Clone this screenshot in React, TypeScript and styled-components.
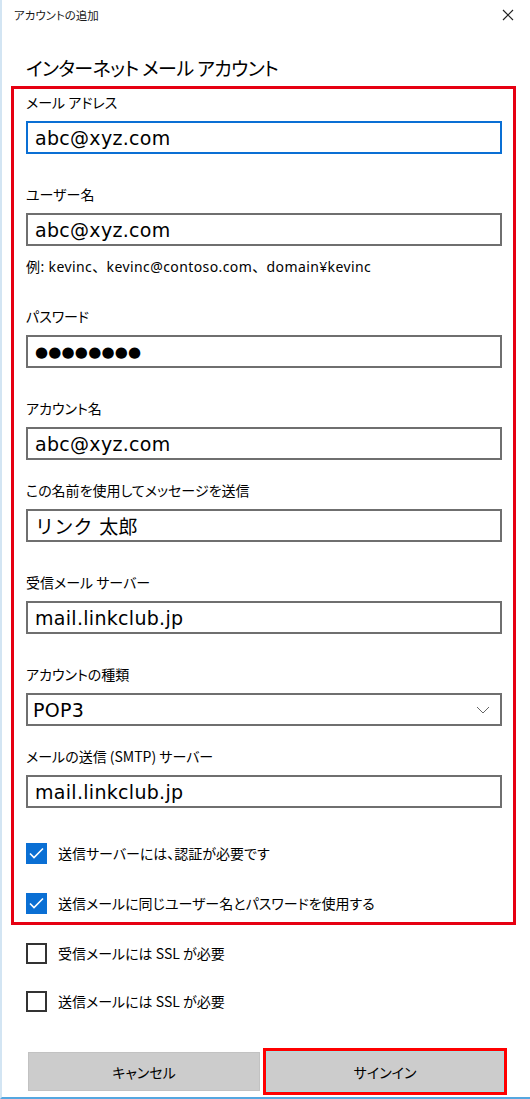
import styled, { createGlobalStyle } from 'styled-components';

const GlobalStyle = createGlobalStyle`
  html, body {
    margin: 0;
    padding: 0;
    background: #ffffff;
    overflow: hidden;
  }
  * {
    box-sizing: border-box;
  }
`;

const Window = styled.div`
  width: 530px;
  height: 1099px;
  background: #ffffff;
  border-left: 2px solid #d3e5f3;
  border-bottom: 2px solid #55a7e0;
  font-family: "Noto Sans CJK JP", "Noto Sans", sans-serif;
  font-feature-settings: "palt";
  color: #000;
  display: flex;
  flex-direction: column;
`;

const TitleBar = styled.div`
  height: 30px;
  display: flex;
  align-items: center;
  justify-content: space-between;
  padding: 0 16px 0 12px;
`;

const TitleText = styled.span`
  font-size: 11.5px;
  color: #1a1a1a;
`;

const CloseButton = styled.button`
  border: none;
  background: none;
  padding: 0;
  width: 12px;
  height: 12px;
  display: flex;
  color: #222;
`;

const Heading = styled.h1`
  margin: 24px 0 4px 24px;
  font-size: 19px;
  line-height: 28px;
  letter-spacing: -0.6px;
  font-weight: 400;
`;

const Body = styled.div`
  padding: 0 14px 0 9px;
`;

const Highlight = styled.div`
  border: 3px solid #e60012;
  padding: 3px 11px 4px 12px;
`;

const Field = styled.div<{ $tight?: boolean }>`
  margin-bottom: ${p => (p.$tight ? 20 : 30)}px;
`;

const Label = styled.div`
  font-size: 14px;
  line-height: 20px;
  margin-bottom: 9px;
`;

const Input = styled.div<{ $focused?: boolean }>`
  height: 33px;
  border: 2px solid ${p => (p.$focused ? '#0a6fd4' : '#6f6f6f')};
  display: flex;
  align-items: center;
  padding-left: 7px;
  font-family: "DejaVu Sans", "Noto Sans CJK JP", sans-serif;
  font-feature-settings: normal;
  font-size: 19px;
  letter-spacing: 0.3px;
`;

const Dots = styled.span`
  font-size: 15px;
  letter-spacing: 0.2px;
`;

const Select = styled(Input)`
  justify-content: space-between;
  padding-right: 10px;
  padding-left: 5px;
  color: #000;
`;

const Hint = styled.div`
  font-family: "Noto Sans", "Noto Sans CJK JP", sans-serif;
  font-feature-settings: normal;
  font-size: 14px;
  letter-spacing: 0.4px;
  line-height: 18px;
  margin: -18px 0 30px;
`;

const CheckRow = styled.label<{ $gap?: number }>`
  display: flex;
  align-items: center;
  height: 30px;
  gap: 11px;
  font-size: 14px;
  margin-bottom: ${p => p.$gap ?? 0}px;
`;

const Box = styled.span<{ $checked?: boolean }>`
  width: 21px;
  height: 21px;
  flex: none;
  display: flex;
  align-items: center;
  justify-content: center;
  background: ${p => (p.$checked ? '#0a6fd4' : '#fff')};
  border: 2px solid ${p => (p.$checked ? '#0a6fd4' : '#333')};
`;

const Outside = styled.div`
  padding-left: 15px;
  margin-top: 13px;
`;

const Buttons = styled.div`
  display: flex;
  align-items: center;
  gap: 3px;
  margin-top: 32px;
  padding-left: 26px;
`;

const Button = styled.button`
  width: 232px;
  height: 39px;
  background: #cccccc;
  border: 1px solid #c2c2c2;
  font-family: inherit;
  font-feature-settings: "palt";
  font-size: 14px;
  color: #000;
  padding: 0;
`;

const PrimaryWrap = styled.div`
  border: 3px solid #ff0000;
`;

const PrimaryButton = styled(Button)`
  width: 238px;
  height: 41px;
  border: 1px solid #a8dde0;
  display: block;
`;

const Check = () => (
  <svg width="15" height="12" viewBox="0 0 15 12">
    <path d="M1 6.5 L5 10.5 L14 1.5" fill="none" stroke="#fff" strokeWidth="1.6" />
  </svg>
);

export default function App() {
  return (
    <>
      <GlobalStyle />
      <Window>
        <TitleBar>
          <TitleText>アカウントの追加</TitleText>
          <CloseButton aria-label="閉じる">
            <svg width="12" height="12" viewBox="0 0 12 12">
              <path d="M1 1 L11 11 M11 1 L1 11" stroke="#222" strokeWidth="1.2" />
            </svg>
          </CloseButton>
        </TitleBar>
        <Heading>インターネット メール アカウント</Heading>
        <Body>
          <Highlight>
            <Field>
              <Label>メール アドレス</Label>
              <Input $focused>abc@xyz.com</Input>
            </Field>
            <Field>
              <Label>ユーザー名</Label>
              <Input>abc@xyz.com</Input>
            </Field>
            <Hint>例: kevinc、kevinc@contoso.com、domain¥kevinc</Hint>
            <Field>
              <Label>パスワード</Label>
              <Input><Dots>●●●●●●●●</Dots></Input>
            </Field>
            <Field $tight>
              <Label>アカウント名</Label>
              <Input>abc@xyz.com</Input>
            </Field>
            <Field>
              <Label>この名前を使用してメッセージを送信</Label>
              <Input>リンク 太郎</Input>
            </Field>
            <Field>
              <Label>受信メール サーバー</Label>
              <Input>mail.linkclub.jp</Input>
            </Field>
            <Field $tight>
              <Label>アカウントの種類</Label>
              <Select>
                POP3
                <svg width="14" height="8" viewBox="0 0 14 8">
                  <path d="M1 1 L7 7 L13 1" fill="none" stroke="#666" strokeWidth="1" />
                </svg>
              </Select>
            </Field>
            <Field>
              <Label>メールの送信 (SMTP) サーバー</Label>
              <Input>mail.linkclub.jp</Input>
            </Field>
            <CheckRow $gap={20}>
              <Box $checked><Check /></Box>
              送信サーバーには、認証が必要です
            </CheckRow>
            <CheckRow>
              <Box $checked><Check /></Box>
              送信メールに同じユーザー名とパスワードを使用する
            </CheckRow>
          </Highlight>
          <Outside>
            <CheckRow $gap={18}>
              <Box />
              受信メールには SSL が必要
            </CheckRow>
            <CheckRow>
              <Box />
              送信メールには SSL が必要
            </CheckRow>
          </Outside>
        </Body>
        <Buttons>
          <Button>キャンセル</Button>
          <PrimaryWrap>
            <PrimaryButton>サインイン</PrimaryButton>
          </PrimaryWrap>
        </Buttons>
      </Window>
    </>
  );
}
